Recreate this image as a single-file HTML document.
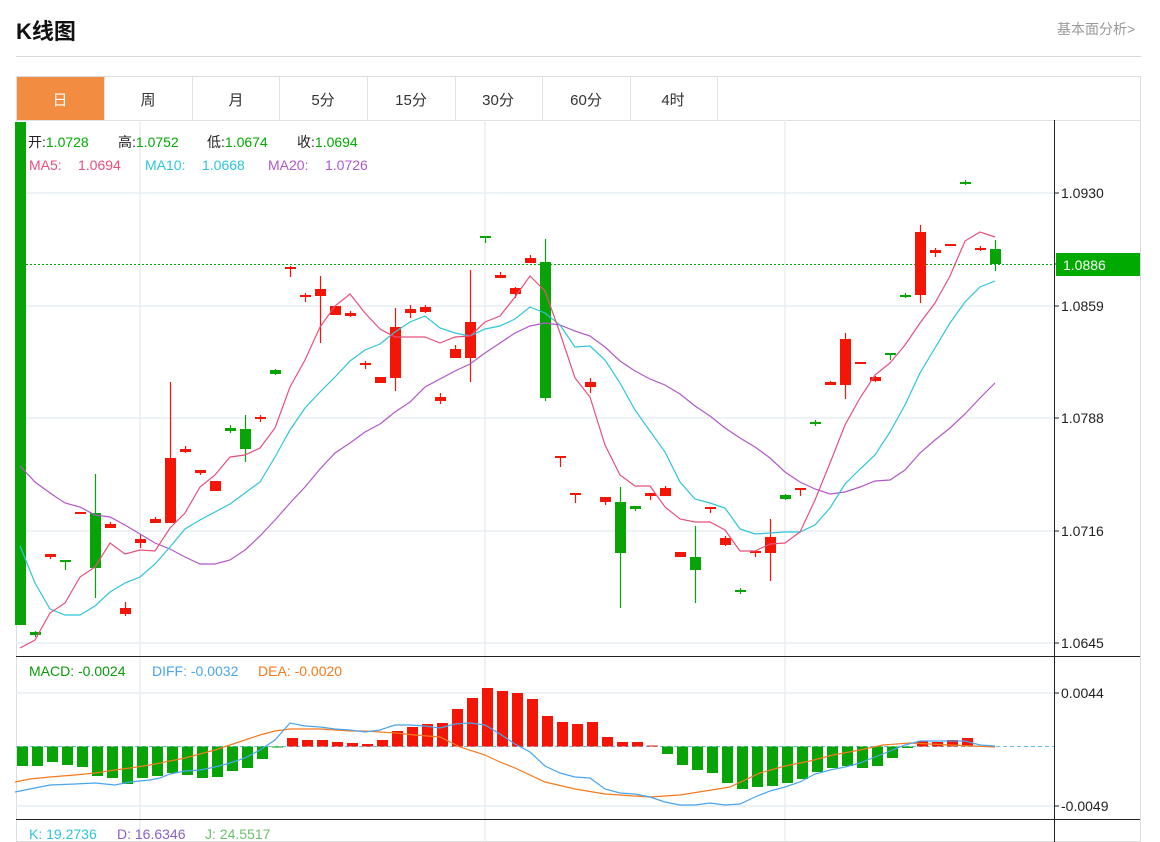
<!DOCTYPE html>
<html><head><meta charset="utf-8">
<style>
*{margin:0;padding:0;box-sizing:border-box}
body{width:1160px;height:842px;background:#fff;font-family:"Liberation Sans","Noto Sans CJK SC",sans-serif;position:relative;overflow:hidden}
.t{position:absolute;white-space:nowrap}
</style></head><body>
<div class="t" style="left:16px;top:14px;font-size:22px;font-weight:bold;color:#111">K线图</div>
<div class="t" style="left:1057px;top:19px;font-size:14px;color:#999">基本面分析&gt;</div>
<div style="position:absolute;left:16px;top:56px;width:1125px;height:1px;background:#d8d8d8"></div>
<svg width="1160" height="842" style="position:absolute;left:0;top:0" id="s" xmlns="http://www.w3.org/2000/svg" font-family="Liberation Sans, Noto Sans CJK SC, sans-serif">
<rect x="16.5" y="76.5" width="1124" height="765" fill="none" stroke="#ddd"/>
<line x1="16" y1="120.5" x2="1140" y2="120.5" stroke="#e2e2e2"/>
<rect x="17" y="77" width="87" height="43" fill="#f28c40"/>
<g stroke="#e2e2e2"><line x1="104.5" y1="77" x2="104.5" y2="120"/><line x1="192.5" y1="77" x2="192.5" y2="120"/><line x1="279.5" y1="77" x2="279.5" y2="120"/><line x1="367.5" y1="77" x2="367.5" y2="120"/><line x1="455.5" y1="77" x2="455.5" y2="120"/><line x1="542.5" y1="77" x2="542.5" y2="120"/><line x1="630.5" y1="77" x2="630.5" y2="120"/><line x1="717.5" y1="77" x2="717.5" y2="120"/></g>
<g font-size="15" text-anchor="middle" fill="#333">
<text x="60" y="105" fill="#fff">日</text><text x="148" y="105">周</text><text x="236" y="105">月</text><text x="323" y="105">5分</text><text x="411" y="105">15分</text><text x="498" y="105">30分</text><text x="586" y="105">60分</text><text x="673" y="105">4时</text></g>
<g stroke="#e6edf3" stroke-width="1.5">
<line x1="16" y1="193" x2="1054" y2="193"/><line x1="16" y1="306" x2="1054" y2="306"/><line x1="16" y1="418" x2="1054" y2="418"/><line x1="16" y1="531" x2="1054" y2="531"/><line x1="16" y1="643" x2="1054" y2="643"/>
<line x1="16" y1="693" x2="1054" y2="693"/><line x1="16" y1="806" x2="1054" y2="806"/>
<line x1="140" y1="120" x2="140" y2="842"/><line x1="485" y1="120" x2="485" y2="842"/><line x1="785" y1="120" x2="785" y2="842"/>
</g>
<line x1="1054.5" y1="120" x2="1054.5" y2="842" stroke="#222"/>
<line x1="16" y1="656.5" x2="1140" y2="656.5" stroke="#222"/>
<line x1="16" y1="819.5" x2="1140" y2="819.5" stroke="#222"/>
<g stroke="#222"><line x1="1054" y1="193" x2="1059" y2="193"/><line x1="1054" y1="306" x2="1059" y2="306"/><line x1="1054" y1="418" x2="1059" y2="418"/><line x1="1054" y1="531" x2="1059" y2="531"/><line x1="1054" y1="643" x2="1059" y2="643"/><line x1="1054" y1="693" x2="1059" y2="693"/><line x1="1054" y1="806" x2="1059" y2="806"/><line x1="1054" y1="264" x2="1059" y2="264"/></g>
<g font-size="14" fill="#222"><text x="1061" y="198">1.0930</text><text x="1061" y="311">1.0859</text><text x="1061" y="423">1.0788</text><text x="1061" y="536">1.0716</text><text x="1061" y="648">1.0645</text><text x="1061" y="698">0.0044</text><text x="1061" y="811">-0.0049</text></g>
<line x1="26" y1="264.5" x2="1054" y2="264.5" stroke="#0a0" stroke-dasharray="2,2"/>
<rect x="1056" y="253" width="84" height="23" fill="#0a0"/>
<text x="1063" y="270" font-size="14" fill="#fff">1.0886</text>
<line x1="16" y1="746.5" x2="1054" y2="746.5" stroke="#6bc0e6" stroke-dasharray="4,3"/>
<g id="c"></g>
<g font-size="14">
<text x="28" y="147" fill="#222">开:<tspan fill="#0a0">1.0728</tspan></text>
<text x="118" y="147" fill="#222">高:<tspan fill="#0a0">1.0752</tspan></text>
<text x="207" y="147" fill="#222">低:<tspan fill="#0a0">1.0674</tspan></text>
<text x="297" y="147" fill="#222">收:<tspan fill="#0a0">1.0694</tspan></text>
<text x="29" y="170" fill="#e8507a">MA5:</text><text x="78" y="170" fill="#e8507a">1.0694</text>
<text x="145" y="170" fill="#2ec5da">MA10:</text><text x="202" y="170" fill="#2ec5da">1.0668</text>
<text x="268" y="170" fill="#b358c8">MA20:</text><text x="325" y="170" fill="#b358c8">1.0726</text>
<text x="29" y="676" fill="#0a9a0a">MACD: -0.0024</text><text x="152" y="676" fill="#4aa5f0">DIFF: -0.0032</text><text x="258" y="676" fill="#f57a1e">DEA: -0.0020</text>
<text x="29" y="839" fill="#2ec5da">K: 19.2736</text><text x="117" y="839" fill="#8a60c8">D: 16.6346</text><text x="205" y="839" fill="#6cbf6c">J: 24.5517</text>
</g>
</svg>
<script>
var C=[
['g',122,625,122,625],['g',632,635,631,637],['r',554,557,554,559],['g',560,562,560,570],['r',512,514,512,514],['g',513,568,474,598],['r',524,528,522,528],['r',608,614,602,616],['r',539,543,535,548],['r',519,523,517,523],['r',458,523,382,523],['r',449,452,446,453],['r',470,473,470,475],['r',481,491,481,491],['g',428,431,425,433],['g',429,449,415,462],['r',417,419,415,422],['g',370,374,369,375],['r',267,269,266,277],['r',295,297,293,302],['r',289,296,276,343],['r',306,315,306,315],['r',313,316,311,317],
['r',363,365,361,369],['r',377,383,377,383],['r',327,378,308,391],['r',309,313,305,318],['r',307,312,305,313],['r',397,401,393,404],['r',349,358,345,358],['r',322,358,270,382],['g',236,238,236,243],['r',275,278,272,278],['r',288,294,287,298],['r',258,263,255,263],['g',262,398,239,401],['r',456,457,456,467],['r',493,495,493,503],['r',382,387,378,393],['r',497,502,497,505],['g',502,553,487,608],['g',506,509,506,511],['r',493,496,493,500],['r',488,496,486,496],
['r',552,557,552,557],['g',557,570,526,603],['r',507,509,507,513],['r',538,545,536,546],['g',590,592,588,594],['r',551,553,551,557],['r',537,553,519,581],['g',495,499,494,500],['r',488,489,488,496],['g',422,423,420,426],['r',382,385,381,385],['r',339,385,333,399],['r',362,364,362,364],['r',377,381,376,382],['g',353,355,353,360],['g',295,297,293,298],['r',232,295,225,303],['r',250,253,248,257],['r',244,246,244,246],['g',182,183,180,185],['r',248,250,246,251],['g',249,264,240,271]];
var ma5=[648,640,613,603,577,567,543,554,550,551,528,513,487,475,457,455,448,428,387,360,327,306,294,313,329,337,337,337,343,337,336,322,316,297,276,291,333,378,397,445,475,486,486,507,519,522,522,530,551,551,544,543,532,500,463,425,398,375,363,345,323,303,276,241,232,237];
var ma10=[546,583,609,615,615,606,592,583,577,564,547,529,520,512,504,493,482,457,430,408,392,377,361,350,344,332,322,316,328,333,336,329,326,319,307,313,325,347,346,360,383,410,431,452,482,499,503,508,529,534,533,532,532,525,508,484,469,455,432,405,373,348,323,302,287,281];
var ma20=[466,482,493,503,507,515,517,525,534,543,549,557,564,564,560,550,536,520,503,487,469,453,443,432,424,412,402,387,379,371,364,353,343,333,326,323,325,331,336,347,361,371,379,385,394,406,416,428,438,447,458,472,482,489,494,492,487,481,480,470,453,440,428,414,398,383];
var mb=[766,766,762,765,767,776,778,784,778,776,773,775,778,777,771,768,759,747.5,738,740,740,742,743,744,740,731,727,724,723,709,698,688,691,693,699,716,722,724,722,737,742,742,745.5,754,765,770,773,783,789,787,786,783,779,772,768,766,768,766,758,748,741,742,740,738];
var dif=[[15,792],[30,789],[50,785],[75,784],[95,783],[115,785],[130,782],[150,780],[160,778],[170,774],[185,771],[200,770],[215,767],[230,763],[245,758],[260,750],[275,740],[290,723],[305,726],[320,727],[335,729],[350,730],[365,732],[380,730],[395,725],[410,725],[425,726],[440,728],[455,724],[470,723],[485,725],[500,734],[515,744],[530,752],[545,766],[560,773],[575,777],[590,778],[605,789],[620,793],[635,794],[650,797],[665,802],[680,805],[695,805],[710,803],[725,805],[740,804],[755,797],[770,791],[785,787],[800,782],[815,774],[830,770],[845,767],[860,763],[875,757],[890,751],[905,745],[920,741],[935,741],[950,741],[965,741],[980,745],[995,746]];
var dea=[[15,782],[30,779],[50,777],[75,775],[95,773],[115,770],[130,768],[150,765],[170,761],[185,758],[200,754],[215,750],[230,745],[245,740],[260,735],[275,731],[290,729],[305,729],[320,729],[335,730],[350,731],[365,731],[380,732],[395,733],[415,735],[440,737],[460,747],[485,755],[500,762],[515,768],[545,782],[575,789],[605,794],[635,796],[650,797],[680,795],[705,791],[730,787],[760,773],[785,766],[810,761],[833,755],[860,750],[883,745],[910,743],[950,745],[995,747]];
var h='';
function pl(a,c){return '<polyline fill="none" stroke="'+c+'" stroke-width="1.2" points="'+a+'"/>';}
C.forEach(function(d,i){var x=20+15*i,col=d[0]=='r'?'#f31505':'#07a307';
if(d[3]<d[1]||d[4]>d[2])h+='<line x1="'+(x+.5)+'" y1="'+d[3]+'" x2="'+(x+.5)+'" y2="'+d[4]+'" stroke="'+col+'" stroke-width="1.2"/>';
var hh=Math.max(d[2]-d[1],2);h+='<rect x="'+(x-5)+'" y="'+d[1]+'" width="11" height="'+hh+'" fill="'+col+'"/>';});
h+=pl(ma20.map(function(y,i){return (20+15*i)+','+y}).join(' '),'#b358c8');
h+=pl(ma10.map(function(y,i){return (20+15*i)+','+y}).join(' '),'#2ec5da');
h+=pl(ma5.map(function(y,i){return (20+15*i)+','+y}).join(' '),'#e8507a');
mb.forEach(function(y,i){var x=17+15*i,col=y<746.5?'#f31505':'#07a307';var t=Math.min(y,746.5),b=Math.max(y,746.5);h+='<rect x="'+x+'" y="'+t+'" width="11" height="'+Math.max(b-t,1)+'" fill="'+col+'"/>';});
h+=pl(dea.map(function(p){return p.join(',')}).join(' '),'#f57a1e');
h+=pl(dif.map(function(p){return p.join(',')}).join(' '),'#4aa5f0');
document.getElementById('c').innerHTML=h;
</script>
</body></html>
